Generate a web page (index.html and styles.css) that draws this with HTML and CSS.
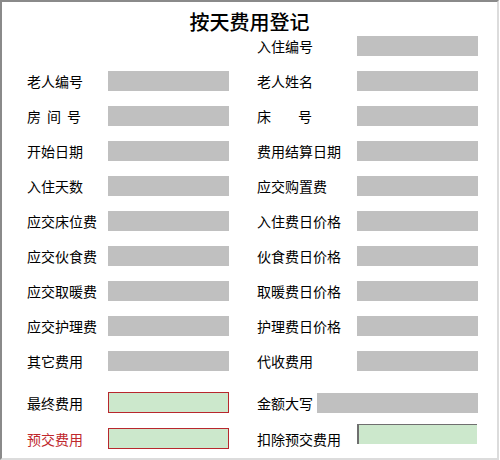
FILE: index.html
```html
<!DOCTYPE html>
<html lang="zh-CN">
<head>
  <meta charset="UTF-8" />
  <title>按天费用登记</title>
  <link rel="stylesheet" href="styles.css">
</head>
<body>
  <div class="frame">
    <h1 class="title">按天费用登记</h1>

    <!-- 基本信息 -->
    <div class="fields">
      <div class="field"></div>
      <div class="field right"><span class="label">入住编号</span><span class="box"></span></div>

      <div class="field"><span class="label">老人编号</span><span class="box"></span></div>
      <div class="field right"><span class="label">老人姓名</span><span class="box"></span></div>

      <div class="field"><span class="label spaced">房间号</span><span class="box"></span></div>
      <div class="field right"><span class="label wide">床号</span><span class="box"></span></div>

      <div class="field"><span class="label">开始日期</span><span class="box"></span></div>
      <div class="field right"><span class="label">费用结算日期</span><span class="box"></span></div>

      <div class="field"><span class="label">入住天数</span><span class="box"></span></div>
      <div class="field right"><span class="label">应交购置费</span><span class="box"></span></div>

      <div class="field"><span class="label">应交床位费</span><span class="box"></span></div>
      <div class="field right"><span class="label">入住费日价格</span><span class="box"></span></div>

      <div class="field"><span class="label">应交伙食费</span><span class="box"></span></div>
      <div class="field right"><span class="label">伙食费日价格</span><span class="box"></span></div>

      <div class="field"><span class="label">应交取暖费</span><span class="box"></span></div>
      <div class="field right"><span class="label">取暖费日价格</span><span class="box"></span></div>

      <div class="field"><span class="label">应交护理费</span><span class="box"></span></div>
      <div class="field right"><span class="label">护理费日价格</span><span class="box"></span></div>

      <div class="field"><span class="label">其它费用</span><span class="box"></span></div>
      <div class="field right"><span class="label">代收费用</span><span class="box"></span></div>
    </div>

    <!-- 合计 -->
    <div class="fields totals">
      <div class="field"><span class="label">最终费用</span><span class="box money"></span></div>
      <div class="field right"><span class="label short">金额大写</span><span class="box long"></span></div>

      <div class="field"><span class="label red">预交费用</span><span class="box money"></span></div>
      <div class="field right"><span class="label">扣除预交费用</span><span class="box sunken"></span></div>
    </div>
  </div>
</body>
</html>
```

FILE: styles.css
```css
body {
  margin: 0;
  background: #fff;
  font-family: "Noto Sans CJK SC", "Noto Sans", sans-serif;
  color: #000;
}

.frame {
  width: 499px;
  height: 460px;
  box-sizing: border-box;
  border-top: 2px solid #8a8a8a;
  border-left: 2px solid #8a8a8a;
  border-right: 2px solid #dcdcdc;
  border-bottom: 2px solid #dcdcdc;
  padding: 8px 0 0 25px;
}

.title {
  margin: 0;
  font-size: 20px;
  font-weight: 500;
  line-height: 24px;
  text-align: center;
  padding-right: 25px;
}

.fields {
  display: grid;
  grid-template-columns: 202px 221px;
  column-gap: 28px;
  row-gap: 15px;
  margin-top: 2px;
}

.field {
  display: flex;
  align-items: center;
  height: 20px;
}

.label {
  width: 81px;
  flex: none;
  font-size: 14px;
  line-height: 20px;
  white-space: nowrap;
}

.right .label {
  width: 100px;
}

.right .label.short {
  width: 60px;
}

.spaced {
  letter-spacing: 6px;
}

.wide {
  letter-spacing: 27px;
}

.red {
  color: #c0282d;
}

.box {
  width: 121px;
  height: 20px;
  background: #c0c0c0;
}

.box.long {
  width: 161px;
}

/* 合计区 */
.totals {
  margin-top: 21px;
}

.totals .field {
  height: 21px;
}

.box.money {
  height: 21px;
  box-sizing: border-box;
  background: #cce8cc;
  border: 1px solid #b8272d;
}

.box.sunken {
  width: 120px;
  box-sizing: border-box;
  background: #cce8cc;
  border-top: 1px solid #6f6f6f;
  border-left: 2px solid #6f6f6f;
  align-self: flex-start;
  margin-top: -4px;
}
```
